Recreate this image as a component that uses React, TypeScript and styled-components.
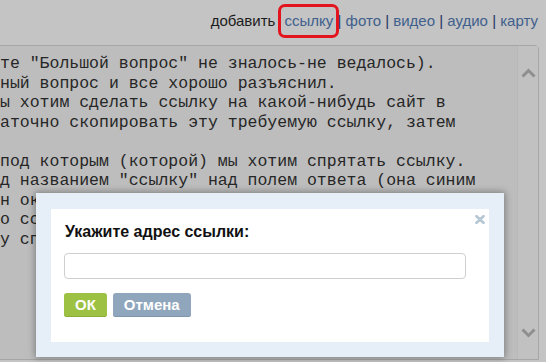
import React from "react";
import styled, { createGlobalStyle } from "styled-components";

const GlobalStyle = createGlobalStyle`
  html, body { margin: 0; padding: 0; background: #c4c4c4; }
  body { font-family: "Liberation Sans", Arial, sans-serif; }
`;

const Page = styled.div`
  position: relative;
  width: 546px;
  height: 362px;
  overflow: hidden;
  background: #c4c4c4;
`;

const Toolbar = styled.div`
  box-sizing: border-box;
  height: 45px;
  padding: 12px 8px 0 0;
  text-align: right;
  font-family: "Liberation Sans", Arial, sans-serif;
  font-size: 15px;
  line-height: 17px;
  white-space: nowrap;
  color: #1c1c1c;
`;

const Label = styled.span`
  color: #1c1c1c;
`;

const LinkItem = styled.span<{ $marked?: boolean }>`
  position: relative;
  color: #40608d;
  margin-left: ${(p) => (p.$marked ? "5px" : "0")};
  &::after {
    content: "";
    display: ${(p) => (p.$marked ? "block" : "none")};
    position: absolute;
    left: -7px;
    right: -6px;
    top: -8px;
    bottom: -9px;
    border: 3px solid #e3141d;
    border-radius: 7px;
  }
`;

const Sep = styled.span`
  color: #1e3664;
`;

const TextBox = styled.div`
  box-sizing: border-box;
  display: flex;
  height: 315px;
  margin: 0 7px 0 -4px;
  border: 1px solid #a6a6a6;
  border-radius: 0 4px 0 0;
  background: #bdbdbd;
`;

const TextColumn = styled.div`
  flex: 1;
  overflow: hidden;
  padding: 8px 0 0 3px;
  font-family: "Liberation Mono", "Courier New", monospace;
  font-size: 16.5px;
  line-height: 19.5px;
  color: #262626;
  white-space: pre;
`;

const Line = styled.div`
  height: 19.5px;
`;

const Scrollbar = styled.div`
  box-sizing: border-box;
  width: 21px;
  display: flex;
  flex-direction: column;
  justify-content: space-between;
  align-items: center;
  padding: 22px 0 21px;
  background: #c1c1c1;
  border-left: 1px solid #b9b9b9;
`;

const Dialog = styled.div`
  position: absolute;
  left: 36px;
  top: 193px;
  box-sizing: border-box;
  width: 468px;
  height: 164px;
  padding: 16px 15px 15px 15px;
  background: #e6eef7;
  box-shadow: 0 0 7px 1px rgba(0, 0, 0, 0.35);
`;

const Panel = styled.div`
  position: relative;
  box-sizing: border-box;
  height: 100%;
  background: #ffffff;
  padding: 14px 13px 0 13px;
`;

const CloseButton = styled.div`
  position: absolute;
  top: 6px;
  right: 4px;
  width: 10px;
  height: 9px;
  display: flex;
`;

const Title = styled.div`
  font-family: "Liberation Sans", Arial, sans-serif;
  font-weight: bold;
  font-size: 16px;
  line-height: 18px;
  color: #111111;
  padding-left: 1px;
`;

const UrlInput = styled.input`
  display: block;
  box-sizing: border-box;
  width: 402px;
  height: 26px;
  margin-top: 12px;
  padding: 0 6px;
  border: 1px solid #cfcfcf;
  border-radius: 4px;
  background: #ffffff;
  outline: none;
  font-family: "Liberation Sans", Arial, sans-serif;
  font-size: 14px;
`;

const Buttons = styled.div`
  display: flex;
  gap: 6px;
  margin-top: 14px;
`;

const Button = styled.button<{ $variant: "ok" | "cancel" }>`
  box-sizing: border-box;
  height: 24px;
  padding: 0 11px;
  border: none;
  border-radius: 3px;
  background: ${(p) => (p.$variant === "ok" ? "#9dc243" : "#8fa6bc")};
  box-shadow: inset 0 -1px 0 ${(p) => (p.$variant === "ok" ? "#8caf38" : "#8096ab")};
  color: #ffffff;
  font-family: "Liberation Sans", Arial, sans-serif;
  font-weight: bold;
  font-size: 15px;
  line-height: 24px;
`;

const Chevron = ({ up }: { up?: boolean }) => (
  <svg width="15" height="10" viewBox="0 0 15 10">
    <polyline
      points={up ? "1.5,8.5 7.5,2.5 13.5,8.5" : "1.5,1.5 7.5,7.5 13.5,1.5"}
      fill="none"
      stroke="#8f8f8f"
      strokeWidth="3"
    />
  </svg>
);

const lines = [
  "те \"Большой вопрос\" не зналось-не ведалось).",
  "ный вопрос и все хорошо разъяснил.",
  "ы хотим сделать ссылку на какой-нибудь сайт в",
  "аточно скопировать эту требуемую ссылку, затем",
  "",
  "под которым (которой) мы хотим спрятать ссылку.",
  "д названием \"ссылку\" над полем ответа (она синим",
  "н ок",
  "о сс",
  "у сп",
];

export default function App() {
  return (
    <>
      <GlobalStyle />
      <Page>
        <Toolbar>
          <Label>добавить</Label> <LinkItem $marked>ссылку</LinkItem>{" "}
          <Sep>|</Sep> <LinkItem>фото</LinkItem> <Sep>|</Sep>{" "}
          <LinkItem>видео</LinkItem> <Sep>|</Sep> <LinkItem>аудио</LinkItem>{" "}
          <Sep>|</Sep> <LinkItem>карту</LinkItem>
        </Toolbar>
        <TextBox>
          <TextColumn>
            {lines.map((l, i) => (
              <Line key={i}>{l}</Line>
            ))}
          </TextColumn>
          <Scrollbar>
            <Chevron up />
            <Chevron />
          </Scrollbar>
        </TextBox>
        <Dialog>
          <Panel>
            <CloseButton>
              <svg width="10" height="9" viewBox="0 0 10 9">
                <path
                  d="M1.5 1.2 L8.5 7.8 M8.5 1.2 L1.5 7.8"
                  stroke="#b5c6d2"
                  strokeWidth="2.6"
                  strokeLinecap="round"
                />
              </svg>
            </CloseButton>
            <Title>Укажите адрес ссылки:</Title>
            <UrlInput type="text" />
            <Buttons>
              <Button $variant="ok">ОК</Button>
              <Button $variant="cancel">Отмена</Button>
            </Buttons>
          </Panel>
        </Dialog>
      </Page>
    </>
  );
}
